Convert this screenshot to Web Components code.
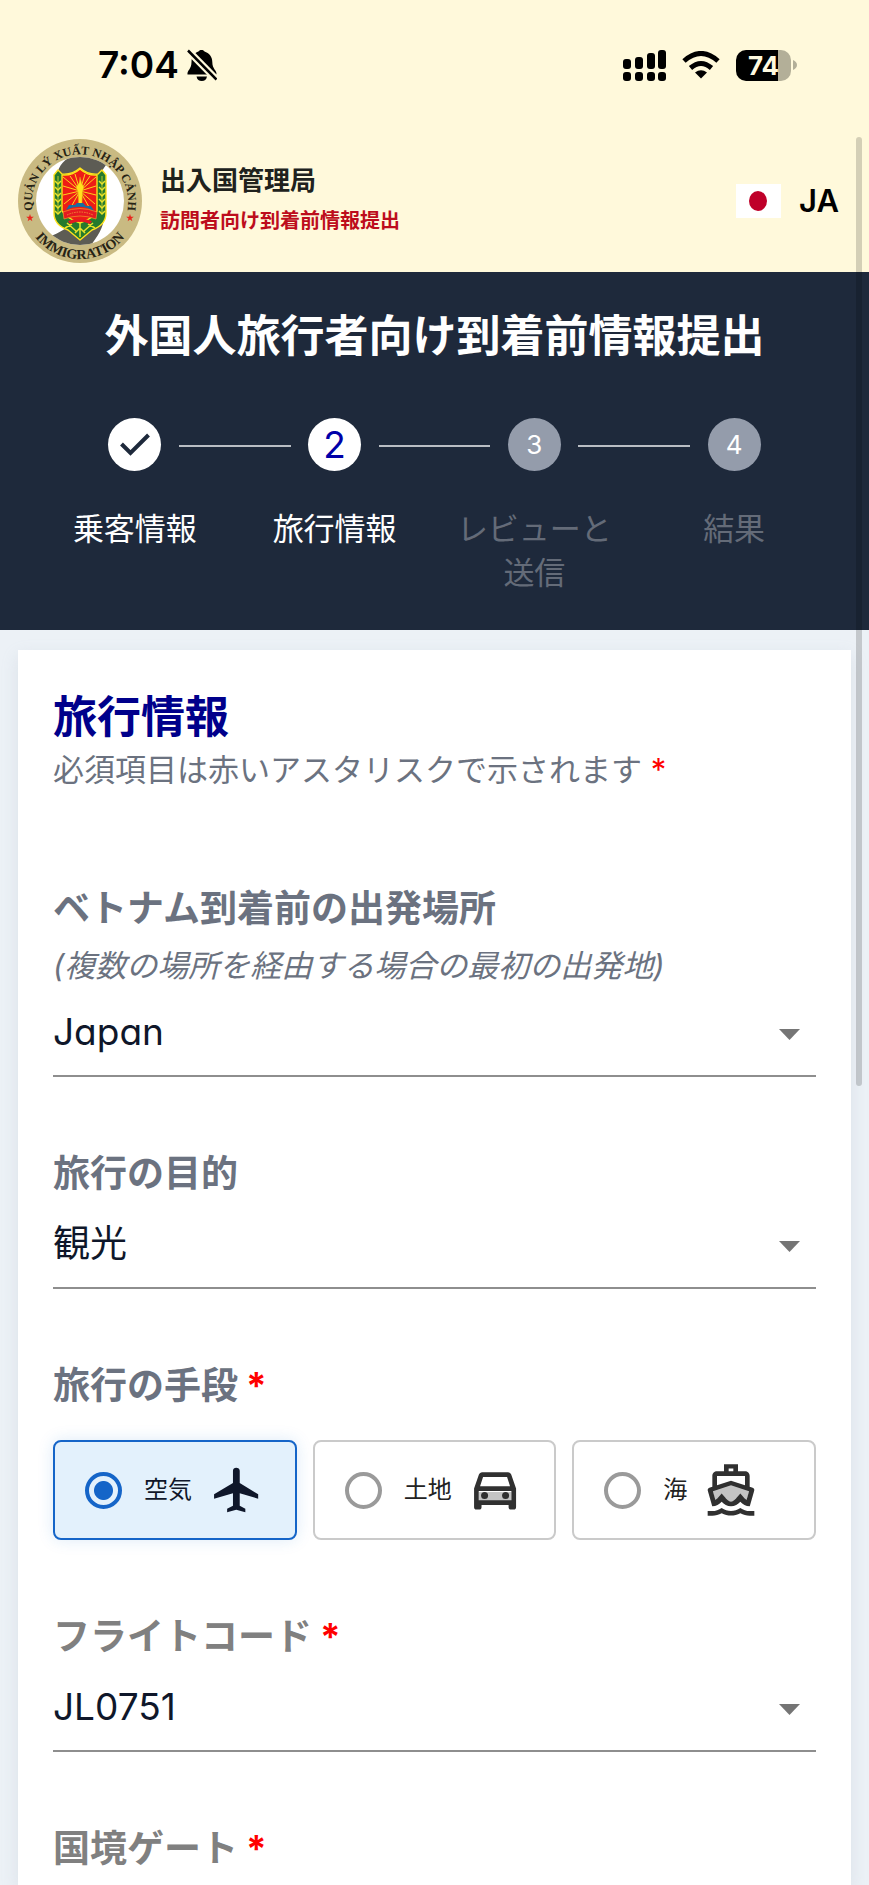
<!DOCTYPE html>
<html lang="ja">
<head>
<meta charset="utf-8">
<meta name="viewport" content="width=device-width, initial-scale=1">
<title>外国人旅行者向け到着前情報提出</title>
<style>
  body {
    margin: 0;
    background: #ecf1f6;
    color: #0f172a;
    font-family: Inter, "Noto Sans CJK JP", sans-serif;
    font-feature-settings: "cv11";
  }
</style>
</head>
<body>
<arrival-app></arrival-app>

<script>
const define = (name, html, setup) => {
  const template = document.createElement('template');
  template.innerHTML = html;
  customElements.define(name, class extends HTMLElement {
    connectedCallback() {
      if (this.shadowRoot) return;
      this.attachShadow({ mode: 'open' }).append(template.content.cloneNode(true));
      if (setup) setup(this, this.shadowRoot);
    }
  });
};

define('status-bar', `
  <style>
    :host { display: flex; justify-content: space-between; align-items: center; height: 130px; padding: 0 72px 0 98px; box-sizing: border-box; color: #000; }
    .side { display: flex; align-items: center; }
    .time { font-size: 37px; font-weight: 600; line-height: 44px; margin-right: 8px; }
    svg { display: block; }
    .signal { margin-right: 16px; }
    .wifi { margin-right: 16px; }
    .battery { display: flex; align-items: center; gap: 2px; }
    .cell { width: 55px; height: 31px; border-radius: 10px; background: linear-gradient(90deg, #000 42px, #b3af98 42px); color: #fffae0; font-size: 26px; font-weight: 700; line-height: 31px; text-align: center; }
  </style>
  <div class="side">
    <span class="time">7:04</span>
    <svg width="30" height="33" viewBox="0 0 30 33" aria-label="消音">
      <path d="M.5 25.500C0 21 4.500 20.500 4.500 13C4.500 7 8 3.500 11.500 2.600C12 .3 17 .3 17.500 2.600C22 4 25.300 8 25.300 13C25.300 20.500 30 21 29.500 25.500Z" fill="#000"/>
      <path d="M9.500 27.500H20C19.500 30.500 17.500 32 14.800 32C12 32 10 30.500 9.500 27.500Z" fill="#000"/>
      <path d="M1 1.500L30 31" stroke="#fff9db" stroke-width="7"/>
      <path d="M1 1.500L29.500 30.500" stroke="#000" stroke-width="2.500"/>
    </svg>
  </div>
  <div class="side">
    <svg class="signal" width="43" height="31" viewBox="0 0 43 31" aria-label="電波">
      <g fill="#000"><rect y="9" width="8" height="10" rx="3"/><rect x="12" y="7" width="8" height="12" rx="3"/><rect x="24" y="3" width="8" height="16" rx="3"/><rect x="35" width="8" height="19" rx="3"/>
      <rect y="22" width="8" height="9" rx="3"/><rect x="12" y="22" width="8" height="9" rx="3"/><rect x="24" y="22" width="8" height="9" rx="3"/><rect x="35" y="22" width="8" height="9" rx="3"/></g>
    </svg>
    <svg class="wifi" width="38" height="28" viewBox="0 0 38 28" aria-label="Wi-Fi">
      <path d="M2 10Q19 -5 36 10" fill="none" stroke="#000" stroke-width="5"/>
      <path d="M8.500 17Q19 8 29.500 17" fill="none" stroke="#000" stroke-width="5"/>
      <path d="M13 21.500Q19 17 25 21.500L19 27.500Z" fill="#000"/>
    </svg>
    <div class="battery"><div class="cell">74</div>
      <svg width="4" height="10" viewBox="0 0 4 10"><path d="M0 0Q4 2 4 5T0 10Z" fill="#b3af98"/></svg>
    </div>
  </div>`);

define('immigration-emblem', `
  <style>
    :host { display: block; width: 124px; height: 124px; flex: none; }
    svg { display: block; width: 100%; height: 100%; }
    text { font-family: "Liberation Serif", serif; font-weight: 700; fill: #262315; }
  </style>
  <svg viewBox="0 0 124 124" role="img" aria-label="QUẢN LÝ XUẤT NHẬP CẢNH – IMMIGRATION">
    <defs>
      <path id="top" d="M17 80A48 48 0 1 1 107 80"/>
      <path id="bottom" d="M6.500 76A57 57 0 0 0 117.500 76"/>
      <clipPath id="disc"><circle cx="62" cy="62" r="44"/></clipPath>
      <path id="star" d="M0-4L.95-1.300 3.800-1.200 1.500.5 2.350 3.200 0 1.600-2.350 3.200-1.500.5-3.800-1.200-.95-1.300Z"/>
    </defs>
    <circle cx="62" cy="62" r="62" fill="#c9ba82"/>
    <circle cx="62" cy="62" r="44" fill="#fff"/>
    <g clip-path="url(#disc)">
      <path d="M38 40C40 24 50 16 64 15L90 24C84 30 80 38 80 50Z" fill="#5d5c54"/>
      <path d="M30 98C42 94 50 88 58 82L86 78C86 90 76 102 70 110L40 108Z" fill="#5d5c54"/>
    </g>
    <g stroke="#ffe21c" stroke-width="1.400" stroke-linejoin="round">
      <path d="M36 36L40 31L44 35Q54 36 62 29Q70 36 80 35L84 31L88 36V74Q88 86 74 91L62 101L50 91Q36 86 36 74Z" fill="#257a2d"/>
      <path d="M44 36Q54 37 62 30Q70 37 79 36V72Q76 79 62 84Q48 79 44 72Z" fill="#ee1c16"/>
    </g>
    <g stroke="#ffd21c" stroke-width="1">
      <path d="M62 52L45 38M62 52L52 37M62 52L57 35M62 52L67 35M62 52L72 37M62 52L78 38M62 52L45 47M62 52L45 56M62 52L46 65M62 52L78 47M62 52L78 56M62 52L77 65M62 52L53 68M62 52L71 68"/>
    </g>
    <path d="M60.500 65L60 53 58 48 61 44 62 38 64 45 66 48 64.500 53 64 65Z" fill="#ffe21c" stroke="#d98b16" stroke-width=".5"/>
    <g fill="none" stroke="#e9e22a" stroke-width="1.500">
      <path d="M40 37V74M84 37V74" stroke-width=".8"/>
      <path d="M37 42L40 45L43 42M37 48L40 51L43 48M37 54L40 57L43 54M37 60L40 63L43 60M37 66L40 69L43 66M37 72L40 75L43 72M81 42L84 45L87 42M81 48L84 51L87 48M81 54L84 57L87 54M81 60L84 63L87 60M81 66L84 69L87 66M81 72L84 75L87 72"/>
      <path d="M49 84L58 92M75 84L66 92M47 89L54 85M77 89L70 85M62 83V98M57 94L62 89L67 94"/>
    </g>
    <path d="M48 71L51 66H57L59 64H65L68 67H73L76 72Q62 64 48 71Z" fill="#176fa2"/>
    <path d="M45 73Q62 66 79 73L78 80Q62 74 46 80Z" fill="#e51a20" stroke="#f09a2b" stroke-width=".7"/>
    <path d="M49 76Q62 70 75 76" fill="none" stroke="#f08c34" stroke-width="1" stroke-dasharray="1.500 1"/>
    <path d="M50 82Q62 77 74 82L72 85Q62 80 52 85Z" fill="#e51a20"/>
    <use href="#star" transform="translate(12 79)" fill="#e8251c"/>
    <use href="#star" transform="translate(112 79)" fill="#e8251c"/>
    <text font-size="12"><textPath href="#top" startOffset="50%" text-anchor="middle">QUẢN LÝ XUẤT NHẬP CẢNH</textPath></text>
    <text font-size="14"><textPath href="#bottom" startOffset="50%" text-anchor="middle">IMMIGRATION</textPath></text>
  </svg>`);

define('site-header', `
  <style>
    :host { display: flex; align-items: center; height: 142px; padding: 0 30px 0 18px; box-sizing: border-box; }
    .names { margin-left: 18px; flex: 1; }
    .org { font-size: 26px; line-height: 40px; font-weight: 700; color: #20221d; }
    .sub { font-size: 20px; line-height: 40px; font-weight: 700; color: #bd0d1c; }
    button { display: flex; align-items: center; gap: 18px; padding: 0; border: 0; background: none; font: 600 31px/40px Inter, sans-serif; color: #000; cursor: pointer; }
    svg { display: block; }
  </style>
  <immigration-emblem></immigration-emblem>
  <div class="names">
    <div class="org">出入国管理局</div>
    <div class="sub">訪問者向け到着前情報提出</div>
  </div>
  <button type="button" aria-label="言語: JA">
    <svg width="45" height="34" viewBox="0 0 45 34"><path d="M0 0H45V34H0Z" fill="#fff"/><ellipse cx="22" cy="17" rx="9" ry="10" fill="#bf0029"/></svg>
    <span>JA</span>
  </button>`);

define('progress-step', `
  <style>
    :host { display: grid; justify-items: center; align-content: start; row-gap: 36px; position: relative; color: #fff; }
    .dot { width: 53px; height: 53px; border-radius: 50%; background: #fff; color: #0000a8; display: grid; place-items: center; font-size: 37px; line-height: 53px; }
    :host([state="todo"]) .dot { background: #949cab; color: #fff; font-size: 26px; }
    :host([state="todo"]) .name { color: #646b78; }
    .name { font-size: 31px; line-height: 44px; text-align: center; max-width: 160px; }
    :host(:not([last]))::after { content: ""; position: absolute; left: calc(50% + 44px); right: calc(44px - 50%); top: 27px; height: 2px; background: #b9bdc3; }
    svg { display: none; }
    :host([state="done"]) svg { display: block; }
    :host([state="done"]) .num { display: none; }
  </style>
  <div class="dot"><span class="num"></span>
    <svg width="32" height="24" viewBox="0 0 32 24"><path d="M2.500 11L11.500 20L29.500 2" fill="none" stroke="#1e293b" stroke-width="4"/></svg>
  </div>
  <div class="name"><slot></slot></div>`,
  (host, root) => { root.querySelector('.num').textContent = host.getAttribute('state') === 'done' ? '' : host.getAttribute('number'); });

define('progress-banner', `
  <style>
    :host { display: block; background: #1e293b; padding: 34px 35px 35px; }
    h1 { margin: 0 0 52px; font-size: 44px; line-height: 60px; font-weight: 700; color: #fff; text-align: center; }
    .steps { display: grid; grid-template-columns: repeat(4, 1fr); }
  </style>
  <h1><slot></slot></h1>
  <div class="steps">
    <progress-step state="done" number="1">乗客情報</progress-step>
    <progress-step state="current" number="2">旅行情報</progress-step>
    <progress-step state="todo" number="3">レビューと送信</progress-step>
    <progress-step state="todo" number="4" last>結果</progress-step>
  </div>`);

define('select-field', `
  <style>
    :host { display: block; --label: #6b7280; }
    :host([tone="gray"]) { --label: #808080; }
    label { display: block; font-size: 37px; line-height: 44px; font-weight: 700; color: var(--label); }
    .req { color: #f00; margin-left: 8px; }
    .hint { margin: 13px 0 3px; font-size: 31px; line-height: 44px; font-style: italic; color: #6b7280; }
    .box { position: relative; margin-top: 7px; }
    :host([hint]) .box { margin-top: 0; }
    select { appearance: none; display: block; width: 100%; height: 86px; box-sizing: border-box; margin: 0; padding: 0 48px 4px 0; border: 0; border-bottom: 2px solid #8e8e8e; border-radius: 0; background: none; color: #0f172a; font: inherit; font-size: 37px; font-feature-settings: inherit; }
    svg { position: absolute; right: 16px; top: 38px; pointer-events: none; }
  </style>
  <label for="s"></label>
  <div class="box">
    <select id="s"><option></option></select>
    <svg width="21" height="11" viewBox="0 0 21 11"><path d="M0 0H21L10.500 11Z" fill="#757575"/></svg>
  </div>`,
  (host, root) => {
    const label = root.querySelector('label');
    label.textContent = host.getAttribute('label');
    if (host.hasAttribute('required')) {
      const star = document.createElement('span');
      star.className = 'req';
      star.textContent = '*';
      label.append(star);
    }
    if (host.hasAttribute('hint')) {
      const hint = document.createElement('div');
      hint.className = 'hint';
      hint.textContent = host.getAttribute('hint');
      label.after(hint);
    }
    root.querySelector('option').textContent = host.getAttribute('value');
  });

define('travel-means', `
  <style>
    :host { display: block; }
    fieldset { margin: 0; padding: 0; border: 0; min-width: 0; }
    legend { padding: 0; font-size: 37px; line-height: 44px; font-weight: 700; color: #6b7280; }
    .req { color: #f00; margin-left: 8px; }
    .row { display: grid; grid-template-columns: repeat(3, 1fr); gap: 16px; margin-top: 32px; }
    label { display: flex; align-items: center; height: 100px; box-sizing: border-box; padding-left: 30px; border: 2px solid #cacaca; border-radius: 8px; font-size: 24px; line-height: 36px; color: #222; cursor: pointer; }
    label:has(:checked) { border-color: #1565c8; background: #e3f1fc; color: #0f172a; box-shadow: 0 0 16px #1976d226; }
    input { appearance: none; flex: none; width: 37px; height: 37px; box-sizing: border-box; margin: 0 22px 0 0; border: 4px solid #9a9a9a; border-radius: 50%; }
    input:checked { border-color: #1565c8; background: radial-gradient(circle, #1565c8 9px, transparent 10px); }
    svg { flex: none; margin-left: 16px; }
  </style>
  <fieldset>
    <legend>旅行の手段<span class="req">*</span></legend>
    <div class="row">
      <label><input type="radio" name="means" checked><span>空気</span>
        <svg width="56" height="56" viewBox="0 0 24 24" fill="#0f172a"><path d="M21.500 15.700V13.800L13.600 9V3.800C13.600 2.900 12.900 2.500 12.100 2.500S10.700 2.900 10.700 3.800V9L2.600 13.800V15.700L10.700 13.400V18.700L8.200 20V21.500L12.100 20.500L16 21.500V20L13.600 18.700V13.400Z"/></svg></label>
      <label><input type="radio" name="means"><span>土地</span>
        <svg width="56" height="56" viewBox="0 0 24 24"><g transform="translate(-.4 .9)"><path d="M5 12H19V17H5Z" fill="#c4c4c4"/><path d="M18.920 4.510C18.720 3.920 18.160 3.500 17.500 3.500H6.500C5.840 3.500 5.290 3.920 5.080 4.510L3 10.500V18.500C3 19.100 3.400 19.500 4 19.500H5.200C5.800 19.500 6.200 19.100 6.200 18.500V17.500H17.800V18.500C17.800 19.100 18.200 19.500 18.800 19.500H20C20.600 19.500 21 19.100 21 18.500V10.500ZM6.850 5.500H17.140L18.420 9.500H5.570ZM19 15.500H5V11.500H19Z" fill="#303030"/><circle cx="7.500" cy="13.500" r="1.500" fill="#303030"/><circle cx="16.500" cy="13.500" r="1.500" fill="#303030"/></g></svg></label>
      <label><input type="radio" name="means"><span>海</span>
        <svg width="56" height="56" viewBox="0 0 24 24"><path d="M4 12L12 9L20 12L18.500 17L16 15.500L12 18L8 15.500L5.500 17Z" fill="#c4c4c4"/><path d="M20 21C18.610 21 17.220 20.530 16 19.680C13.560 21.390 10.440 21.390 8 19.680C6.780 20.530 5.390 21 4 21H2V23H4C5.370 23 6.740 22.650 8 22C10.520 23.300 13.480 23.300 16 22C17.260 22.650 18.620 23 20 23H22V21ZM3.950 19H4C5.600 19 7.020 18.120 8 17C8.980 18.120 10.400 19 12 19S15.020 18.120 16 17C16.980 18.120 18.400 19 20 19H20.050L21.940 12.320C22.110 11.790 21.870 11.220 21.280 11.040L20 10.620V6C20 4.900 19.100 4 18 4H15V1H9V4H6C4.900 4 4 4.900 4 6V10.620L2.720 11.040C2.190 11.210 1.880 11.760 2.060 12.320ZM11 2.800H13V4H11ZM6 6H18V9.970L12 8L6 9.970ZM12 10L19.750 12.540L18.670 16.300C18.380 16.130 18 15.800 17.490 15.240L16 13.500L14.500 15.240C14.100 15.750 13.040 17 12 17S9.900 15.750 9.500 15.240L8 13.500L6.500 15.240C6 15.800 5.610 16.130 5.320 16.300L4.240 12.540Z" fill="#303030" fill-rule="evenodd"/></svg></label>
    </div>
  </fieldset>`);

define('travel-card', `
  <style>
    :host { display: block; margin: 20px 18px 0; padding: 45px 35px 14px; background: #fff; box-shadow: 0 6px 16px #94a3b833; }
    h2 { margin: 0; font-size: 44px; line-height: 44px; font-weight: 700; color: #00008b; }
    p { margin: 9px 0 95px; font-size: 31px; line-height: 44px; color: #6b7280; }
    p span { color: #f00; }
    form { display: grid; row-gap: 75px; }
  </style>
  <h2>旅行情報</h2>
  <p>必須項目は赤いアスタリスクで示されます <span>*</span></p>
  <form>
    <select-field label="ベトナム到着前の出発場所" hint="(複数の場所を経由する場合の最初の出発地)" value="Japan"></select-field>
    <select-field label="旅行の目的" value="観光"></select-field>
    <travel-means></travel-means>
    <select-field tone="gray" label="フライトコード" value="JL0751" required></select-field>
    <field-label>国境ゲート</field-label>
  </form>`);

define('field-label', `
  <style>
    :host { display: block; font-size: 37px; line-height: 44px; font-weight: 700; color: #808080; }
    .req { color: #f00; margin-left: 8px; }
  </style>
  <slot></slot><span class="req">*</span>`);

define('arrival-app', `
  <style>
    :host { display: block; position: relative; overflow: hidden; }
    .top { background: #fff9db; }
    .thumb { position: absolute; right: 7px; top: 137px; width: 6px; height: 949px; border-radius: 3px; background: #0000002b; }
  </style>
  <div class="top">
    <status-bar></status-bar>
    <site-header></site-header>
  </div>
  <progress-banner>外国人旅行者向け到着前情報提出</progress-banner>
  <travel-card></travel-card>
  <div class="thumb"></div>`);
</script>
</body>
</html>
